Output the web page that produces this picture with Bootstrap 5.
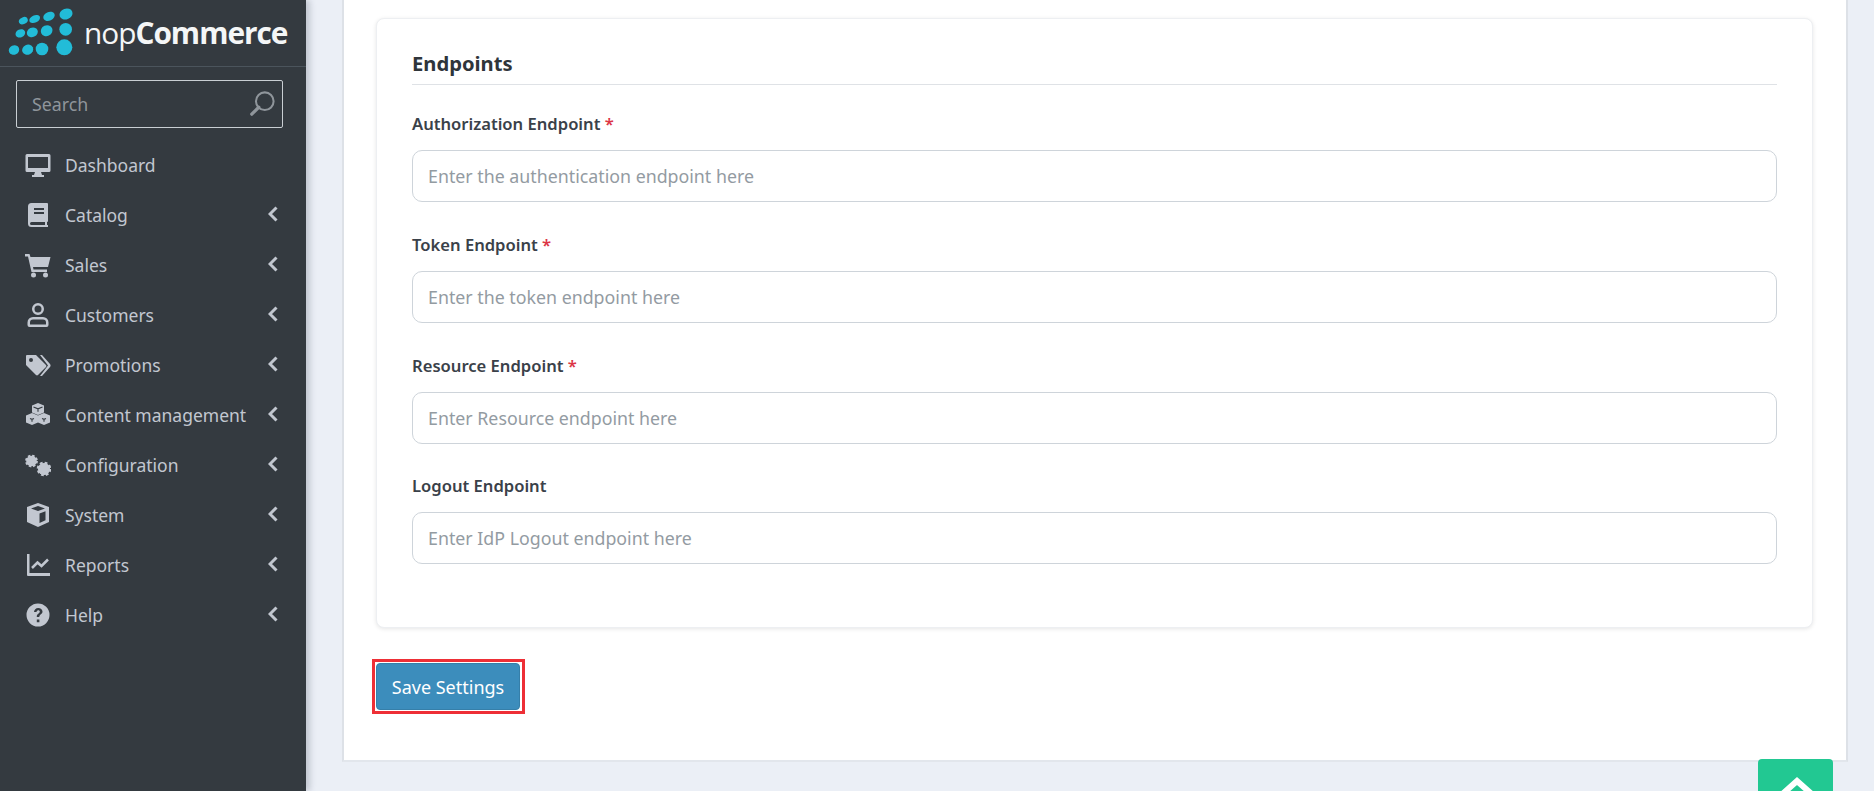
<!DOCTYPE html>
<html lang="en">
  <head>
    <meta charset="UTF-8" />
    <meta name="viewport" content="width=device-width, initial-scale=1.0" />
    <title>Endpoints</title>
    <link href="https://cdn.jsdelivr.net/npm/bootstrap@5.3.0/dist/css/bootstrap.min.css" rel="stylesheet" />
    <style>
      body {
        height: 791px;
        overflow: hidden;
        background: #ebeff6;
        font-family: "Noto Sans", "Liberation Sans", sans-serif;
        font-size: 17.5px;
        color: #343a40;
      }
      .side-bar {
        width: 306px;
        flex: 0 0 306px;
        background: #343a40;
        color: #c2c7d0;
        box-shadow: 4px 0 6px rgba(50, 60, 80, 0.22);
      }
      .side-brand {
        height: 67px;
        border-bottom: 1px solid #4b545c;
      }
      .brand-word {
        font-family: "Open Sans", sans-serif;
        font-size: 29.8px;
        letter-spacing: -1px;
        color: #f4f6f7;
        margin-left: 4px;
      }
      .brand-word b {
        font-weight: 700;
      }
      .side-search {
        margin: 13px 23px 0 16px;
        height: 48px;
        padding: 0 7px 0 15px;
        border: 1px solid #c9ced3;
        border-radius: 2px;
        color: #8f959b;
        font-size: 17.8px;
      }
      .side-menu {
        margin-top: 12px;
      }
      .menu-row {
        height: 50px;
        padding: 0 28px 0 25px;
        color: #c2c7d0;
        text-decoration: none;
      }
      .menu-ico {
        width: 26px;
        height: 26px;
        margin-right: 14px;
        fill: #c2c7d0;
        flex: none;
      }
      .menu-arrow {
        width: 10px;
        height: 16px;
        margin-bottom: 2px;
        stroke: #c2c7d0;
        stroke-width: 3;
        fill: none;
      }
      .main-area {
        padding-left: 36px;
        padding-right: 26px;
      }
      .main-panel {
        height: 762px;
        padding: 18px 33px 0 32px;
        background: #fff;
        border-left: 2px solid #dde1e7;
        border-right: 2px solid #dde1e7;
        border-bottom: 2px solid #e2e6ec;
      }
      .end-card {
        height: 610px;
        padding: 29px 35px 0;
        border: 1px solid #edeff2;
        border-radius: 8px;
        box-shadow: 0 1px 4px rgba(0, 0, 0, 0.1);
      }
      .end-title {
        font-size: 20.2px;
        font-weight: 700;
        line-height: 30px;
        margin: 0;
        padding-bottom: 6px;
        border-bottom: 1px solid #dfe2e6;
        color: #2f353a;
      }
      .end-group {
        height: 120.8px;
        padding-top: 27px;
      }
      .end-label {
        font-size: 16.6px;
        font-weight: 600;
        line-height: 24px;
        margin-bottom: 14px;
        color: #3a4149;
      }
      .end-req {
        color: #dc3545;
      }
      .end-input {
        height: 52px;
        padding: 0 15px;
        font-size: 17.8px;
        border-radius: 10px;
        border-color: #ced4da;
      }
      .end-input::placeholder {
        color: #939ba2;
      }
      .save-mark {
        margin: 31px 0 0 -4px;
        padding: 1px 2px 1px 1px;
        border: 3px solid #ee2f36;
      }
      .save-btn {
        height: 47px;
        width: 144px;
        padding: 1px 0 0;
        background: #3c8dbc;
        border: 1px solid #367fa9;
        border-radius: 4px;
        color: #fff;
        font-size: 18px;
      }
      .top-btn {
        position: absolute;
        left: 1758px;
        top: 759px;
        width: 75px;
        height: 60px;
        padding: 10px 0 0 2px;
        background: #22c892;
        border-radius: 4px;
      }
    </style>
  </head>
  <body>
    <div class="d-flex">
      <aside class="side-bar vh-100">
        <div class="side-brand d-flex align-items-center">
          <svg width="80" height="66" viewBox="0 0 240 198">
            <g fill="#22bcd8">
              <ellipse cx="42" cy="150" rx="16" ry="14" transform="rotate(-25 42 150)" />
              <ellipse cx="83" cy="149" rx="17" ry="15" transform="rotate(-25 83 149)" />
              <circle cx="126" cy="147" r="19" />
              <circle cx="193" cy="142" r="24" />
              <ellipse cx="61" cy="100" rx="15" ry="12" transform="rotate(-25 61 100)" />
              <ellipse cx="97" cy="97" rx="17" ry="14" transform="rotate(-25 97 97)" />
              <ellipse cx="140" cy="92" rx="18" ry="16" transform="rotate(-25 140 92)" />
              <circle cx="197" cy="88" r="19" />
              <ellipse cx="70" cy="62" rx="14" ry="10" transform="rotate(-25 70 62)" />
              <ellipse cx="104" cy="57" rx="17" ry="11" transform="rotate(-25 104 57)" />
              <ellipse cx="147" cy="49" rx="18" ry="13" transform="rotate(-25 147 49)" />
              <ellipse cx="198" cy="42" rx="20" ry="16" transform="rotate(-20 198 42)" />
            </g>
          </svg>
          <span class="brand-word">nop<b>Commerce</b></span>
        </div>
        <div class="side-search d-flex align-items-center justify-content-between">
          <span>Search</span>
          <svg width="26" height="26" viewBox="0 0 28 28" fill="none" stroke="#8f959b" stroke-width="2.200">
            <circle cx="17" cy="11" r="9.500" />
            <path d="M10.500 17.500 3 25" stroke-width="3.500" stroke-linecap="round" />
          </svg>
        </div>
        <nav class="side-menu">
          <a class="menu-row d-flex align-items-center" href="#">
            <svg class="menu-ico" viewBox="0 0 26 26"><path d="M2 2h22a1.500 1.500 0 0 1 1.500 1.500v15a1.500 1.500 0 0 1-1.500 1.500H2a1.500 1.500 0 0 1-1.500-1.500v-15A1.500 1.500 0 0 1 2 2zm1 3v11h20V5zM10 20h6l1 3h2v2H7v-2h2z" fill-rule="evenodd" /></svg>
            <span>Dashboard</span>
          </a>
          <a class="menu-row d-flex align-items-center" href="#">
            <svg class="menu-ico" viewBox="0 0 26 26"><path d="M6.500 1H22a1 1 0 0 1 1 1v17a1 1 0 0 1-1 1v3h1v2H6.500A3.500 3.500 0 0 1 3 21.500v-17A3.500 3.500 0 0 1 6.500 1zm2.500 5v2h10V6zm0 4v2h10v-2zm-2.500 10a1.500 1.500 0 0 0 0 3H20v-3z" fill-rule="evenodd" /></svg>
            <span class="flex-grow-1">Catalog</span>
            <svg class="menu-arrow" viewBox="0 0 10 16"><path d="M8.500 1.500 2 8l6.500 6.500" /></svg>
          </a>
          <a class="menu-row d-flex align-items-center" href="#">
            <svg class="menu-ico" viewBox="0 0 26 26"><path d="M0 2h4.500l1 3h20l-2.500 10H8l.5 2.500H22V20H6.500L3 4.500H0z" /><circle cx="8.500" cy="23" r="2.500" /><circle cx="20.500" cy="23" r="2.500" /></svg>
            <span class="flex-grow-1">Sales</span>
            <svg class="menu-arrow" viewBox="0 0 10 16"><path d="M8.500 1.500 2 8l6.500 6.500" /></svg>
          </a>
          <a class="menu-row d-flex align-items-center" href="#">
            <svg class="menu-ico" viewBox="0 0 26 26"><path d="M13 1a6 6 0 1 1 0 12 6 6 0 0 1 0-12zm0 2.500a3.500 3.500 0 1 0 0 7 3.500 3.500 0 0 0 0-7zM8 15h10a5.500 5.500 0 0 1 5.500 5.500V23a2 2 0 0 1-2 2h-17a2 2 0 0 1-2-2v-2.500A5.500 5.500 0 0 1 8 15zm0 2.500a3 3 0 0 0-3 3v2h16v-2a3 3 0 0 0-3-3z" fill-rule="evenodd" /></svg>
            <span class="flex-grow-1">Customers</span>
            <svg class="menu-arrow" viewBox="0 0 10 16"><path d="M8.500 1.500 2 8l6.500 6.500" /></svg>
          </a>
          <a class="menu-row d-flex align-items-center" href="#">
            <svg class="menu-ico" viewBox="0 0 26 26"><path d="M2 3h9l10 10a1.500 1.500 0 0 1 0 2l-8 8a1.500 1.500 0 0 1-2 0L1 13V4a1 1 0 0 1 1-1zm4 3a2 2 0 1 0 0 4 2 2 0 0 0 0-4z" fill-rule="evenodd" /><path d="M15 3h2l8 9a2.500 2.500 0 0 1 0 3l-8 9h-2l8-10.500z" /></svg>
            <span class="flex-grow-1">Promotions</span>
            <svg class="menu-arrow" viewBox="0 0 10 16"><path d="M8.500 1.500 2 8l6.500 6.500" /></svg>
          </a>
          <a class="menu-row d-flex align-items-center" href="#">
            <svg class="menu-ico" viewBox="0 0 26 26">
              <path d="m13 1 6 2.500v7L13 13 7 10.500v-7zM7 11l6 2.500v7L7 23l-6-2.500v-7zm12 0 6 2.500v7L19 23l-6-2.500v-7z" />
              <path d="M8.500 5 13 6.800 17.500 5M13 6.800v3M5 16.500l2 .8 2-.8M7 17.300v2.500M17 16.500l2 .8 2-.8M19 17.300v2.500" fill="none" stroke="#343a40" stroke-width="1.100" />
            </svg>
            <span class="flex-grow-1">Content management</span>
            <svg class="menu-arrow" viewBox="0 0 10 16"><path d="M8.500 1.500 2 8l6.500 6.500" /></svg>
          </a>
          <a class="menu-row d-flex align-items-center" href="#">
            <svg class="menu-ico" viewBox="0 0 26 26" fill="none" stroke="#c2c7d0">
              <circle cx="6.500" cy="9" r="3.500" stroke-width="3" />
              <circle cx="6.500" cy="9" r="5.200" stroke-width="2.400" stroke-dasharray="2.400 1.680" />
              <circle cx="19" cy="17" r="4" stroke-width="3.400" />
              <circle cx="19" cy="17" r="6" stroke-width="2.600" stroke-dasharray="2.700 2" />
            </svg>
            <span class="flex-grow-1">Configuration</span>
            <svg class="menu-arrow" viewBox="0 0 10 16"><path d="M8.500 1.500 2 8l6.500 6.500" /></svg>
          </a>
          <a class="menu-row d-flex align-items-center" href="#">
            <svg class="menu-ico" viewBox="0 0 26 26"><path d="m13 1 11 4v15l-11 5-11-5V5zm0 3L6 6.500 13 9l7-2.500zm1.500 7.500v9.500l6-2.700V9.300z" fill-rule="evenodd" /></svg>
            <span class="flex-grow-1">System</span>
            <svg class="menu-arrow" viewBox="0 0 10 16"><path d="M8.500 1.500 2 8l6.500 6.500" /></svg>
          </a>
          <a class="menu-row d-flex align-items-center" href="#">
            <svg class="menu-ico" viewBox="0 0 26 26"><path d="M2 2h2.500v19H25v3H3a1 1 0 0 1-1-1z" /><path d="m7 16 5.500-5.500 4 3.500L23 7.500" fill="none" stroke="#c2c7d0" stroke-width="2.500" /></svg>
            <span class="flex-grow-1">Reports</span>
            <svg class="menu-arrow" viewBox="0 0 10 16"><path d="M8.500 1.500 2 8l6.500 6.500" /></svg>
          </a>
          <a class="menu-row d-flex align-items-center" href="#">
            <svg class="menu-ico" viewBox="0 0 26 26"><path d="M13 1.500a11.500 11.500 0 1 1 0 23 11.500 11.500 0 0 1 0-23zM9 10h2.500c.2-1 .8-1.700 1.700-1.700 1 0 1.600.6 1.600 1.400 0 1.800-3 1.800-3 4.800v.5h2.500c0-2.500 3.200-2.500 3.200-5.400C17.500 7.500 15.600 6 13.200 6 10.800 6 9.200 7.700 9 10zm2.800 7.500v2.700h2.600v-2.700z" fill-rule="evenodd" /></svg>
            <span class="flex-grow-1">Help</span>
            <svg class="menu-arrow" viewBox="0 0 10 16"><path d="M8.500 1.500 2 8l6.500 6.500" /></svg>
          </a>
        </nav>
      </aside>
      <main class="main-area flex-grow-1">
        <div class="main-panel">
          <div class="end-card card">
            <h5 class="end-title">Endpoints</h5>
            <form>
              <div class="end-group">
                <label class="end-label form-label d-block" for="authEndpoint">Authorization Endpoint <span class="end-req">*</span></label>
                <input class="end-input form-control" id="authEndpoint" type="text" placeholder="Enter the authentication endpoint here" />
              </div>
              <div class="end-group">
                <label class="end-label form-label d-block" for="tokenEndpoint">Token Endpoint <span class="end-req">*</span></label>
                <input class="end-input form-control" id="tokenEndpoint" type="text" placeholder="Enter the token endpoint here" />
              </div>
              <div class="end-group">
                <label class="end-label form-label d-block" for="resourceEndpoint">Resource Endpoint <span class="end-req">*</span></label>
                <input class="end-input form-control" id="resourceEndpoint" type="text" placeholder="Enter Resource endpoint here" />
              </div>
              <div class="end-group">
                <label class="end-label form-label d-block" for="logoutEndpoint">Logout Endpoint</label>
                <input class="end-input form-control" id="logoutEndpoint" type="text" placeholder="Enter IdP Logout endpoint here" />
              </div>
            </form>
          </div>
          <div class="save-mark d-inline-block">
            <button class="save-btn btn d-block" type="button">Save Settings</button>
          </div>
        </div>
      </main>
    </div>
    <div class="top-btn d-flex justify-content-center">
      <svg width="44" height="32" viewBox="0 0 44 32" fill="none" stroke="#fff" stroke-width="6"><path d="M4 28 22 12l18 16" /></svg>
    </div>
    <script src="https://cdn.jsdelivr.net/npm/bootstrap@5.3.0/dist/js/bootstrap.bundle.min.js"></script>
  </body>
</html>
